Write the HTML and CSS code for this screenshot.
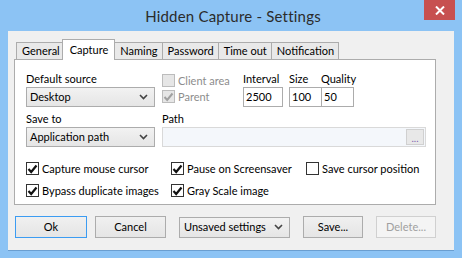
FILE: index.html
```html
<!DOCTYPE html>
<html lang="en">
<head>
    <meta charset="UTF-8">
    <title>Hidden Capture - Settings</title>
    <link rel="stylesheet" href="styles.css">
</head>
<body>
    <div class="window">
        <div class="titlebar">
            <span class="title">Hidden Capture - Settings</span>
            <span class="close">
                <svg width="10" height="9" viewBox="0 0 10 9"><path d="M1 0.5 L9 8.5 M9 0.5 L1 8.5" stroke="#fff" stroke-width="2"/></svg>
            </span>
        </div>
        <div class="client">
            <div class="tabs">
                <span class="tab">General</span>
                <span class="tab active">Capture</span>
                <span class="tab">Naming</span>
                <span class="tab">Password</span>
                <span class="tab">Time out</span>
                <span class="tab">Notification</span>
            </div>
            <div class="panel">
                <div class="row top-row">
                    <div class="col-source">
                        <div class="label">Default source</div>
                        <div class="select"><span>Desktop</span><svg class="chev" width="9" height="6" viewBox="0 0 9 6"><path d="M1 1 L4.5 4.5 L8 1" fill="none" stroke="#444" stroke-width="1.6"/></svg></div>
                    </div>
                    <div class="col-area">
                        <label class="check disabled"><span class="box"></span>Client area</label>
                        <label class="check disabled"><span class="box"><svg width="11" height="10" viewBox="0 0 11 10"><path d="M1.5 5 L4.2 8 L9.5 1.5" fill="none" stroke="#a0a0a0" stroke-width="2"/></svg></span>Parent</label>
                    </div>
                    <div class="col-field interval">
                        <div class="label">Interval</div>
                        <div class="input">2500</div>
                    </div>
                    <div class="col-field size">
                        <div class="label">Size</div>
                        <div class="input">100</div>
                    </div>
                    <div class="col-field quality">
                        <div class="label">Quality</div>
                        <div class="input">50</div>
                    </div>
                </div>
                <div class="row save-row">
                    <div class="col-source">
                        <div class="label">Save to</div>
                        <div class="select"><span>Application path</span><svg class="chev" width="9" height="6" viewBox="0 0 9 6"><path d="M1 1 L4.5 4.5 L8 1" fill="none" stroke="#444" stroke-width="1.6"/></svg></div>
                    </div>
                    <div class="col-path">
                        <div class="label">Path</div>
                        <div class="path-input"><span class="browse">...</span></div>
                    </div>
                </div>
                <div class="options">
                    <label class="check"><span class="box"><svg width="11" height="10" viewBox="0 0 11 10"><path d="M1.5 5 L4.2 8 L9.5 1.5" fill="none" stroke="#111" stroke-width="2.2"/></svg></span>Capture mouse cursor</label>
                    <label class="check"><span class="box"><svg width="11" height="10" viewBox="0 0 11 10"><path d="M1.5 5 L4.2 8 L9.5 1.5" fill="none" stroke="#111" stroke-width="2.2"/></svg></span>Pause on Screensaver</label>
                    <label class="check"><span class="box"></span>Save cursor position</label>
                    <label class="check"><span class="box"><svg width="11" height="10" viewBox="0 0 11 10"><path d="M1.5 5 L4.2 8 L9.5 1.5" fill="none" stroke="#111" stroke-width="2.2"/></svg></span>Bypass duplicate images</label>
                    <label class="check"><span class="box"><svg width="11" height="10" viewBox="0 0 11 10"><path d="M1.5 5 L4.2 8 L9.5 1.5" fill="none" stroke="#111" stroke-width="2.2"/></svg></span>Gray Scale image</label>
                </div>
            </div>
            <div class="buttons">
                <span class="btn ok">Ok</span>
                <span class="btn cancel">Cancel</span>
                <div class="select profile"><span>Unsaved settings</span><svg class="chev" width="9" height="6" viewBox="0 0 9 6"><path d="M1 1 L4.5 4.5 L8 1" fill="none" stroke="#444" stroke-width="1.6"/></svg></div>
                <span class="btn save">Save...</span>
                <span class="btn delete">Delete...</span>
            </div>
        </div>
    </div>
</body>
</html>
```

FILE: styles.css
```css
body {
    margin: 0;
    font-family: Lato, "Noto Sans", sans-serif;
    font-size: 11px;
    color: #000;
}

.window {
    width: 462px;
    height: 258px;
    background: #8cc3f4;
    box-sizing: border-box;
    display: flex;
    flex-direction: column;
}

.titlebar {
    height: 31px;
    display: flex;
    justify-content: center;
    position: relative;
}

.title {
    font-size: 15px;
    color: #2b2b2b;
    line-height: 32px;
    padding-left: 4px;
    letter-spacing: 0.2px;
}

.close {
    position: absolute;
    top: 0;
    right: 7px;
    width: 31px;
    height: 20px;
    background: #c75050;
    display: flex;
    align-items: center;
    justify-content: center;
}

.client {
    margin: 0 8px;
    height: 220px;
    background: #f0f0f0;
    border-bottom: 1px solid #6a9ed0;
    padding: 8px 0 0 6px;
    box-sizing: border-box;
    display: flex;
    flex-direction: column;
}

.tabs {
    display: flex;
    align-items: flex-end;
    height: 20px;
    padding-left: 2px;
    position: relative;
    z-index: 1;
}

.tab {
    height: 17px;
    line-height: 16px;
    padding: 0 4px 0 5px;
    border: 1px solid #acacac;
    border-bottom: none;
    background: #e9e9e9;
    box-sizing: border-box;
    margin-right: -1px;
    white-space: nowrap;
}

.tab.active {
    height: 21px;
    margin: 0 -1px -1px -2px;
    background: #fff;
    padding: 0 6px 0 7px;
    line-height: 19px;
}

.panel {
    width: 422px;
    height: 146px;
    background: #fff;
    border: 1px solid #acacac;
    box-sizing: border-box;
    padding: 11px 0 0 11px;
}

.row {
    display: flex;
}

.label {
    height: 16px;
    line-height: 16px;
    white-space: nowrap;
}

.col-source {
    width: 129px;
}

.select {
    height: 20px;
    border: 1px solid #acacac;
    background: linear-gradient(#f2f2f2, #e5e5e5);
    box-sizing: border-box;
    display: flex;
    align-items: center;
    justify-content: space-between;
    padding: 0 6px 0 3px;
    line-height: 18px;
    white-space: nowrap;
}

.col-area {
    margin-left: 7px;
    width: 81px;
    padding-top: 3px;
    display: flex;
    flex-direction: column;
    gap: 3px;
}

.check {
    display: flex;
    align-items: center;
    gap: 3px;
    height: 13px;
    line-height: 13px;
    white-space: nowrap;
}

.box {
    width: 13px;
    height: 13px;
    border: 1px solid #333;
    background: #fff;
    box-sizing: border-box;
    display: flex;
    align-items: center;
    justify-content: center;
    flex-shrink: 0;
}

.check.disabled {
    color: #8d8d8d;
}

.check.disabled .box {
    border-color: #bcbcbc;
    background: #e6e6e6;
}

.input {
    height: 20px;
    border: 1px solid #acacac;
    box-sizing: border-box;
    padding-left: 2px;
    line-height: 18px;
    background: #fff;
}

.interval .input { width: 40px; }
.size { margin-left: 6px; }
.size .input { width: 33px; }
.quality .input { width: 33px; margin-left: -1px; }
.quality .label { margin-left: -1px; }

.save-row {
    margin-top: 4px;
}

.col-path {
    margin-left: 7px;
}

.path-input {
    width: 264px;
    height: 20px;
    border: 1px solid #d9d9d9;
    background: #f4f7fb;
    box-sizing: border-box;
    display: flex;
    justify-content: flex-end;
    align-items: center;
    padding-right: 1px;
}

.browse {
    width: 18px;
    height: 16px;
    border: 1px solid #d0d0d0;
    background: #e8e8e8;
    box-sizing: border-box;
    color: #8060b0;
    font-size: 10px;
    line-height: 16px;
    text-align: center;
}

.options {
    margin-top: 15px;
    display: grid;
    grid-template-columns: 145px 135px auto;
    row-gap: 9px;
}

.buttons {
    display: flex;
    align-items: center;
    margin-top: 11px;
    padding-left: 1px;
}

.btn {
    height: 22px;
    width: 72px;
    border: 1px solid #acacac;
    background: linear-gradient(#f0f0f0, #e5e5e5);
    box-sizing: border-box;
    text-align: center;
    line-height: 20px;
}

.btn.ok {
    border-color: #3c9cf2;
}

.btn.cancel {
    margin-left: 8px;
    width: 71px;
}

.select.profile {
    margin-left: 13px;
    width: 111px;
    height: 21px;
    padding-left: 4px;
}

.btn.save {
    margin-left: 13px;
    width: 60px;
}

.btn.delete {
    margin-left: 13px;
    width: 60px;
    color: #a0a0a0;
    border-color: #d0d0d0;
    background: #f4f4f4;
}
```
